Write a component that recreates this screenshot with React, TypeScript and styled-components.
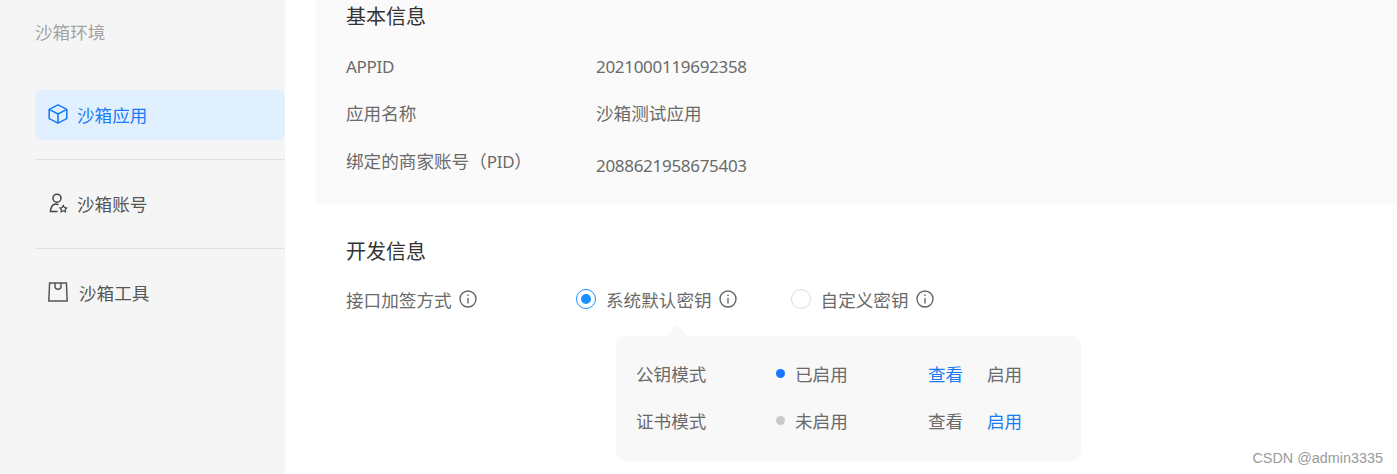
import React from 'react';
import styled, { createGlobalStyle } from 'styled-components';

const GlobalStyle = createGlobalStyle`
    html, body {
        margin: 0;
        padding: 0;
        background: #fff;
        overflow: hidden;
    }
    body {
        font-family: "Liberation Sans", "Noto Sans CJK SC", sans-serif;
        font-size: 17.6px;
        color: #6a6a6a;
    }
`;

const Page = styled.div`
    position: relative;
    display: flex;
    width: 1397px;
    height: 474px;
    overflow: hidden;
`;

const Sidebar = styled.aside`
    width: 285px;
    flex: none;
    box-sizing: border-box;
    padding: 21px 0 0 35px;
    background: #f5f5f5;
`;

const SideTitle = styled.div`
    height: 24px;
    line-height: 24px;
    color: #a3a3a3;
    margin-bottom: 45px;
`;

const SideItem = styled.div<{ $active?: boolean; $gap?: number }>`
    display: flex;
    align-items: center;
    gap: ${(p) => p.$gap ?? 9}px;
    height: 50px;
    box-sizing: border-box;
    padding: 0 0 2px 13px;
    border-radius: 6px;
    color: ${(p) => (p.$active ? '#1a7cf4' : '#555')};
    background: ${(p) => (p.$active ? '#e1f0ff' : 'transparent')};
`;

const SideDivider = styled.div`
    height: 1px;
    margin: 19px 0;
    background: #e0e0e0;
`;

const Content = styled.main`
    flex: 1;
    margin-left: 31px;
`;

const InfoCard = styled.section`
    height: 204px;
    box-sizing: border-box;
    padding: 4px 0 0 30px;
    background: #fafafa;
`;

const SectionTitle = styled.h2`
    margin: 0;
    height: 26px;
    line-height: 26px;
    font-size: 20px;
    font-weight: 400;
    color: #333;
`;

const InfoRows = styled.div`
    margin-top: 12px;
`;

const InfoRow = styled.div`
    display: grid;
    grid-template-columns: 250px 1fr;
    align-items: center;
    height: 48px;
    line-height: 24px;
`;

const InfoValue = styled.span<{ $top?: number }>`
    padding-top: ${(p) => p.$top ?? 0}px;
`;

const LatinText = styled.span`
    font-family: "Noto Sans", sans-serif;
    font-size: 17px;
    letter-spacing: -0.3px;
`;

const DevSection = styled.section`
    padding: 35px 0 0 30px;
`;

const SignRow = styled.div`
    display: grid;
    grid-template-columns: 230px auto;
    justify-content: start;
    align-items: center;
    height: 26px;
    margin-top: 21px;
`;

const LabelWithTip = styled.span`
    display: inline-flex;
    align-items: center;
    gap: 7px;
`;

const RadioGroup = styled.div`
    display: flex;
    align-items: center;
    gap: 54px;
`;

const RadioOption = styled.label`
    display: inline-flex;
    align-items: center;
    gap: 10px;
`;

const RadioCircle = styled.span<{ $checked?: boolean }>`
    position: relative;
    width: 20px;
    height: 20px;
    box-sizing: border-box;
    border-radius: 50%;
    background: #fff;
    border: 1px solid ${(p) => (p.$checked ? '#1890ff' : '#dcdcdc')};
    &::after {
        content: ${(p) => (p.$checked ? "''" : 'none')};
        position: absolute;
        left: 4px;
        top: 4px;
        width: 10px;
        height: 10px;
        border-radius: 50%;
        background: #1890ff;
    }
`;

const ModePanel = styled.div`
    position: relative;
    width: 465px;
    height: 125px;
    box-sizing: border-box;
    margin: 24px 0 0 270px;
    padding: 14px 0 0 20px;
    border-radius: 10px;
    background: #f8f8f8;
    &::before {
        content: '';
        position: absolute;
        left: 53px;
        top: -8px;
        width: 16px;
        height: 16px;
        background: #f8f8f8;
        transform: rotate(45deg);
    }
`;

const ModeRow = styled.div`
    position: relative;
    display: grid;
    grid-template-columns: 140px 152px 59px auto;
    justify-content: start;
    align-items: center;
    height: 47px;
`;

const ModeStatus = styled.span`
    display: inline-flex;
    align-items: center;
    gap: 10px;
`;

const StatusDot = styled.i<{ $on?: boolean }>`
    width: 9px;
    height: 9px;
    margin-bottom: 1px;
    border-radius: 50%;
    background: ${(p) => (p.$on ? '#1677ff' : '#c9c9c9')};
`;

const ModeLink = styled.a<{ $active?: boolean }>`
    color: ${(p) => (p.$active ? '#1a7cf4' : '#6a6a6a')};
`;

const Watermark = styled.div`
    position: absolute;
    right: 14px;
    bottom: 7px;
    font-size: 14.4px;
    line-height: 18px;
    color: #9a9a9a;
`;

const InfoIcon: React.FC = () => (
    <svg width="18" height="18" viewBox="0 0 18 18" fill="none" stroke="#666" strokeWidth="1.4">
        <circle cx="9" cy="9" r="8" />
        <path d="M9 8v5.4" />
        <path d="M9 4.4v1.6" />
    </svg>
);

const CubeIcon: React.FC = () => (
    <svg width="20" height="20" viewBox="0 0 20 20" fill="none" stroke="#1a7cf4" strokeWidth="1.6" strokeLinejoin="round">
        <path d="M10 .9 18.8 5.4v9.2L10 19.1 1.2 14.6V5.4z" />
        <path d="M1.2 5.4 10 10l8.8-4.6" />
        <path d="M10 10v9.1" />
    </svg>
);

const AccountIcon: React.FC = () => (
    <svg width="20" height="20" viewBox="0 0 20 20" fill="none" stroke="#444" strokeWidth="1.5" strokeLinejoin="round">
        <circle cx="9" cy="5.2" r="4" />
        <path d="M10.4 11.8c-.7-.5-1.6-.7-2.7-.7-2.9 0-4.7 2.4-5.3 7.4h7.2" />
        <path d="m15.3 12.2 1.1 2.3 2.5.3-1.8 1.7.5 2.5-2.3-1.2-2.3 1.2.5-2.5-1.8-1.7 2.5-.3z" strokeWidth="1.2" />
    </svg>
);

const BagIcon: React.FC = () => (
    <svg width="20" height="20" viewBox="0 0 20 20" fill="none" stroke="#555" strokeWidth="1.5">
        <path d="M1.6 1h16.8l.8 18H.8z" />
        <path d="M7 1v3.6c0 1.6 1.3 2.6 3 2.6s3-1 3-2.6V1" />
    </svg>
);

const App: React.FC = () => {
    return (
        <Page>
            <GlobalStyle />
            <Sidebar>
                <SideTitle>沙箱环境</SideTitle>
                <SideItem $active>
                    <CubeIcon />
                    <span>沙箱应用</span>
                </SideItem>
                <SideDivider />
                <SideItem>
                    <AccountIcon />
                    <span>沙箱账号</span>
                </SideItem>
                <SideDivider />
                <SideItem $gap={11}>
                    <BagIcon />
                    <span>沙箱工具</span>
                </SideItem>
            </Sidebar>
            <Content>
                <InfoCard>
                    <SectionTitle>基本信息</SectionTitle>
                    <InfoRows>
                        <InfoRow>
                            <InfoValue $top={2}>
                                <LatinText>APPID</LatinText>
                            </InfoValue>
                            <InfoValue $top={2}>
                                <LatinText>2021000119692358</LatinText>
                            </InfoValue>
                        </InfoRow>
                        <InfoRow>
                            <span>应用名称</span>
                            <span>沙箱测试应用</span>
                        </InfoRow>
                        <InfoRow>
                            <span>
                                绑定的商家账号（<LatinText>PID</LatinText>）
                            </span>
                            <InfoValue $top={8}>
                                <LatinText>2088621958675403</LatinText>
                            </InfoValue>
                        </InfoRow>
                    </InfoRows>
                </InfoCard>
                <DevSection>
                    <SectionTitle>开发信息</SectionTitle>
                    <SignRow>
                        <LabelWithTip>
                            接口加签方式
                            <InfoIcon />
                        </LabelWithTip>
                        <RadioGroup>
                            <RadioOption>
                                <RadioCircle $checked />
                                <LabelWithTip>
                                    系统默认密钥
                                    <InfoIcon />
                                </LabelWithTip>
                            </RadioOption>
                            <RadioOption>
                                <RadioCircle />
                                <LabelWithTip>
                                    自定义密钥
                                    <InfoIcon />
                                </LabelWithTip>
                            </RadioOption>
                        </RadioGroup>
                    </SignRow>
                    <ModePanel>
                        <ModeRow>
                            <span>公钥模式</span>
                            <ModeStatus>
                                <StatusDot $on />
                                已启用
                            </ModeStatus>
                            <ModeLink $active>查看</ModeLink>
                            <ModeLink>启用</ModeLink>
                        </ModeRow>
                        <ModeRow>
                            <span>证书模式</span>
                            <ModeStatus>
                                <StatusDot />
                                未启用
                            </ModeStatus>
                            <ModeLink>查看</ModeLink>
                            <ModeLink $active>启用</ModeLink>
                        </ModeRow>
                    </ModePanel>
                </DevSection>
            </Content>
            <Watermark>CSDN @admin3335</Watermark>
        </Page>
    );
};

export default App;
